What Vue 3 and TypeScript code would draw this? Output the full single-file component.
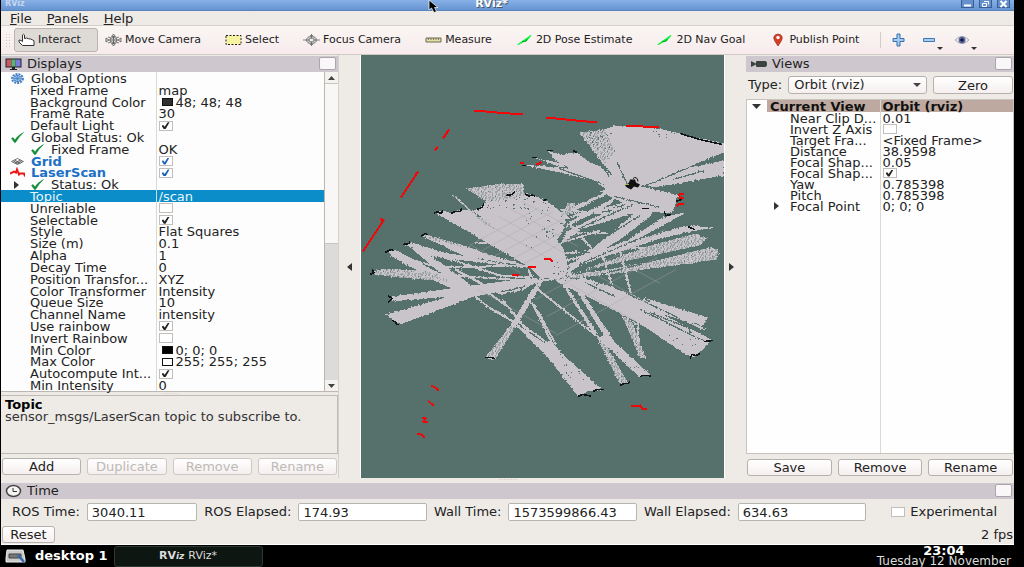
<script setup lang="ts">
import { ref } from 'vue'

type Row = {
  name: string
  value?: string
  checked?: boolean
  swatch?: string
  level?: 'top' | 'child' | 'nested'
  icon?: 'gear' | 'tick' | 'grid' | 'laser'
  expander?: boolean
  display?: boolean
  selected?: boolean
}

const displays = ref<Row[]>([
  { name: 'Global Options', level: 'top', icon: 'gear' },
  { name: 'Fixed Frame', value: 'map' },
  { name: 'Background Color', value: '48; 48; 48', swatch: '#303030' },
  { name: 'Frame Rate', value: '30' },
  { name: 'Default Light', checked: true },
  { name: 'Global Status: Ok', level: 'top', icon: 'tick' },
  { name: 'Fixed Frame', value: 'OK', level: 'nested', icon: 'tick' },
  { name: 'Grid', level: 'top', icon: 'grid', checked: true, display: true },
  { name: 'LaserScan', level: 'top', icon: 'laser', checked: true, display: true },
  { name: 'Status: Ok', level: 'nested', icon: 'tick', expander: true },
  { name: 'Topic', value: '/scan', selected: true },
  { name: 'Unreliable', checked: false },
  { name: 'Selectable', checked: true },
  { name: 'Style', value: 'Flat Squares' },
  { name: 'Size (m)', value: '0.1' },
  { name: 'Alpha', value: '1' },
  { name: 'Decay Time', value: '0' },
  { name: 'Position Transfor...', value: 'XYZ' },
  { name: 'Color Transformer', value: 'Intensity' },
  { name: 'Queue Size', value: '10' },
  { name: 'Channel Name', value: 'intensity' },
  { name: 'Use rainbow', checked: true },
  { name: 'Invert Rainbow', checked: false },
  { name: 'Min Color', value: '0; 0; 0', swatch: '#000000' },
  { name: 'Max Color', value: '255; 255; 255', swatch: '#ffffff' },
  { name: 'Autocompute Int...', checked: true },
  { name: 'Min Intensity', value: '0' },
])

const view = ref<Row[]>([
  { name: 'Near Clip D...', value: '0.01' },
  { name: 'Invert Z Axis', checked: false },
  { name: 'Target Fra...', value: '<Fixed Frame>' },
  { name: 'Distance', value: '38.9598' },
  { name: 'Focal Shap...', value: '0.05' },
  { name: 'Focal Shap...', checked: true },
  { name: 'Yaw', value: '0.785398' },
  { name: 'Pitch', value: '0.785398' },
  { name: 'Focal Point', value: '0; 0; 0', expander: true },
])

const tools = ['Interact', 'Move Camera', 'Select', 'Focus Camera', 'Measure', '2D Pose Estimate', '2D Nav Goal', 'Publish Point']
const activeTool = ref('Interact')

const clocks = [
  { id: 'ros-time', label: 'ROS Time:', value: '3040.11' },
  { id: 'ros-elapsed', label: 'ROS Elapsed:', value: '174.93' },
  { id: 'wall-time', label: 'Wall Time:', value: '1573599866.43' },
  { id: 'wall-elapsed', label: 'Wall Elapsed:', value: '634.63' },
]

/* Free space swept by the scanner, in scene units. */
const free = [
  '579,133 593,132 604,130 613,127 622,126 645,127 662,130 680,134 700,139 724,144 724,153 706,160 690,167 672,174 655,182 640,187 624,187 614,177 606,168 592,150',
  '724,161 724,176 700,180 653,188 648,186 690,168',
  '547,151 563,156 567,153 577,153 590,163 600,167 618,180 626,187 615,194 593,180 573,170 557,162',
  '522,165 545,167 573,169 597,178 592,181 560,173 540,169',
  '533,158 548,161 566,165 562,168',
  '590,178 600,180 645,213 636,212',
  '610,175 640,212 632,212 600,180',
  '620,187 640,187 660,191 678,196 675,206 671,214 658,213 640,211 622,203 600,192',
  '435,213 443,211 452,214 461,210 478,210 484,204 502,196 515,196 525,193 536,197 547,202 558,210 566,216 563,232 557,240 564,250 569,272 558,280 540,278 530,268',
  '640,209 655,210 650,217 620,240 585,262 560,280 547,277 575,262 606,238',
  '617,189 568,215 556,225 562,212 600,195',
  '618,196 570,222 556,238 562,230 610,205',
  '634,202 590,220 566,232 560,246 580,230 640,212',
  '688,212 668,223 632,243 598,252 627,241 663,218',
  '714,228 695,231 660,239 560,272 600,251 686,226',
  '423,235 430,236 480,252 529,267 465,257 425,238',
  '405,245 412,243 440,252 529,269 480,263 432,257',
  '408,246 420,249 450,270 480,292 478,297 440,273',
  '389,252 395,250 432,270 465,287 480,296 465,295 432,280 392,257',
  '392,297 392,302 448,297 545,281 532,278 465,287',
  '385,315 400,325 408,322 472,298 542,283 532,280 465,292 415,307',
  '542,280 540,287 517,326 511,325 532,290',
  '517,325 545,344 550,340 565,357 602,390 588,392 578,397 552,363 532,340',
  '574,287 580,289 615,343 650,375 640,378 612,352 595,335 605,338',
  '552,278 585,280 650,309 710,340 707,346 694,358 681,352 640,324 595,301 560,284',
  '600,285 650,300 708,318 703,326 680,320 640,308 600,289',
]

/* Sparse returns, drawn with a dithered fill. */
const sparse = [
  '466,189 495,185 523,184 525,196 505,200 487,203',
  '450,194 456,197 490,225 500,233 485,225',
  '579,133 604,130 615,152 605,164 592,150',
  '707,239 696,234 650,246 560,279 590,269 700,246',
  '718,250 710,248 640,264 550,281 600,276 717,260',
  '372,272 385,269 432,272 450,282 398,278 375,275',
  '422,235 430,236 480,251 430,240',
  '622,316 640,358 646,358 632,322 640,330 637,324',
  '511,325 517,325 495,360 485,358',
  '568,203 576,203 573,214 562,217',
  '595,335 607,347 628,383 620,385',
]

/* Narrow rays between the wider sweeps. */
const rays = [
  'M395 256L440 268L532 266', 'M430 274L536 282L720 254', 'M432 254L500 276L530 278', 'M455 270L500 294L522 290L548 275',
  'M475 244L490 243', 'M540 268L690 228', 'M560 210L605 214', 'M566 233L608 233', 'M575 215L635 206',
  'M558 221L640 200', 'M610 181L635 215', 'M600 248L618 305L624 319', 'M619 247L631 295', 'M570 225L592 249', 'M528 270L534 282',
  'M475 297L492 310L515 323L548 357', 'M488 293L508 307L522 325L552 347', 'M502 300L530 335', 'M532 303L551 342', 'M534 305L556 345',
  'M538 290L596 336', 'M562 283L595 335', 'M564 284L597 335',
  'M560 271L624 293L705 330', 'M565 242L600 231', 'M558 255L592 251L645 248', 'M650 309L711 341', 'M638 321L639 355',
]

const holes = [
  'M617 163L627 184', 'M673 180L705 171', 'M594 158L609 176', 'M559 169L604 185', 'M614 197L661 208', 'M579 229L633 205', 'M602 240L640 216',
  'M640 310L705 342', 'M650 313L700 333', 'M625 293L680 319', 'M612 351L626 378',
  'M568 240L608 226', 'M579 265L637 240', 'M600 275L690 252', 'M610 285L650 302', 'M566 250L590 253', 'M457 197L480 218', 'M585 283L615 297',
]

const walls = [
  'M434 214l3-2 4 2 2-3', 'M451 214l4-2 5 0 2-3', 'M477 210l5-2 2-4', 'M506 196l6-1 3-3', 'M525 194l4 3 3-2 3 2',
  'M421 237l4-3 3 1', 'M403 245l6-1 1-2', 'M385 253l6-3 3 1', 'M370 275l4-2-2-3', 'M388 296l4 3-4 4', 'M392 321l3 1 2 3 2 0',
  'M485 358l6 0 4 1', 'M578 397l4-2 7 1 2 1', 'M593 392l4-2 7 0', 'M620 386l4-2 4 0 2-2', 'M640 377l3-1 6 0 2 1', 'M690 359l2-4 4 1 4-2',
  'M704 342l9-1', 'M577 153l-4-2', 'M547 151l6 0', 'M680 134l20 6 22 5', 'M688 227l4 2 3 1', 'M664 212l2 4 5-1', 'M642 209l7 0',
  'M676 202l5-2-2-4', 'M543 201l4-1', 'M532 158l5 0', 'M522 166l4 0',
]

const hits = [
  'M474 111l23 2 26 2', 'M546 118l20 2 31 3', 'M626 126l33 2', 'M449 130l-6 9', 'M438 147l-3 4', 'M418 172l-17 26', 'M384 220l-21 32', 'M380 219l4 3',
  'M520 164l4-1', 'M536 165l4-1 1-2', 'M544 260l5-1 4 3', 'M528 268l8-1', 'M512 275l7 0', 'M684 194l-5 1 1 3 4 0', 'M684 204l-6 1-1 2',
  'M431 386l4 2 4 3', 'M428 401l3 3 3 2', 'M422 418l4 1-3 3 5 1', 'M417 434l4 1 4 3', 'M631 407l9-1 2 3 5 1',
]

/* Deterministic scatter so the map looks the same on every load. */
let seed = 17
const next = () => (seed = (seed * 16807) % 2147483647) / 2147483647
const scatter = (n: number, x: number, y: number, w: number, h: number) =>
  Array.from({ length: n }, () => `M${Math.round(x + next() * w)} ${Math.round(y + next() * h)}h1`).join('')
const gaps = [
  scatter(34, 485, 198, 75, 12), scatter(38, 526, 208, 36, 42), scatter(40, 584, 132, 30, 18), scatter(10, 650, 128, 24, 12),
  scatter(24, 560, 355, 30, 30), scatter(20, 660, 320, 36, 26), scatter(20, 552, 262, 20, 20), scatter(16, 600, 342, 40, 32),
].join('')
</script>

<template>
  <div class="desktop">
    <div class="window">
      <header class="titlebar">
        <span class="sys">RViz</span>
        <span class="title">RViz*</span>
        <div class="wm">
          <button aria-label="Minimise"><svg width="11" height="8" viewBox="0 0 11 8"><path d="M2 5.500h7" stroke="#fff" stroke-width="2" /></svg></button>
          <button aria-label="Restore"><svg width="11" height="8" viewBox="0 0 11 8"><path d="M4 1.500h4.500v3M2.500 3.500h4v3h-4z" fill="none" stroke="#fff" /></svg></button>
          <button aria-label="Close"><svg width="11" height="8" viewBox="0 0 11 8"><path d="M2.500 1l6 6m0-6l-6 6" stroke="#fff" stroke-width="2" /></svg></button>
        </div>
      </header>

      <nav class="menubar">
        <button><u>F</u>ile</button>
        <button><u>P</u>anels</button>
        <button><u>H</u>elp</button>
      </nav>

      <div class="toolbar">
        <i class="handle"></i>
        <button v-for="tool in tools" :key="tool" class="tool" :class="{ active: tool === activeTool }" @click="activeTool = tool">
          <svg width="17" height="14" viewBox="0 0 17 14">
            <path v-if="tool === 'Interact'" d="M4.500 12.500L1 9V7l2 .5 1.500 1V2q1-1.500 2 0v3.500l2-.5 2 .7 2 .3 2 .8 1.500 1v4.700z" fill="#fff" stroke="#333" />
            <g v-else-if="tool === 'Move Camera'" fill="#ddd" stroke="#555" stroke-width=".8">
              <path d="M8.500 1l2 2.500h-4zM8.500 13l2-2.500h-4zM1 5l3 2-3 2zM16 5l-3 2 3 2z" /><ellipse cx="8.500" cy="7" rx="3.500" ry="2.500" /><path d="M4 7h9M8.500 3v8M3 4l3 1M14 4l-3 1M3 10l3-1M14 10l-3-1" />
            </g>
            <path v-else-if="tool === 'Select'" d="M1 2.500h15v9H1z" fill="#f7f3a0" stroke="#222" stroke-dasharray="2 1.500" />
            <g v-else-if="tool === 'Focus Camera'" fill="#ccc" stroke="#666" stroke-width=".8">
              <ellipse cx="8.500" cy="7" rx="5" ry="3.800" /><ellipse cx="8.500" cy="7" rx="2.500" ry="2" fill="#eee" /><path d="M8.500 1v4.500M8.500 8.500V13M0 7h6M11 7h6M7 2.500h3M7 11.500h3" />
            </g>
            <g v-else-if="tool === 'Measure'"><path d="M1 5h15v4H1z" fill="#e5dfa4" stroke="#6a6855" /><path d="M3.500 5v2M6 5v2M8.500 5v2M11 5v2M13.500 5v2" stroke="#6a6855" stroke-width=".8" /></g>
            <path v-else-if="tool === 'Publish Point'" d="M9 13L5.500 7.500Q3 2 9 1q6 1 3.500 6.500z" fill="#d73d22" stroke="#942a18" stroke-width=".7" />
            <g v-else><path d="M1 11.500L9 6l5.500-4 1 .5L11 8 8 9l-5.500 3z" fill="#0cf53c" /><path d="M6 8.500l4-.3 1-2" fill="none" stroke="#079b25" /></g>
            <circle v-if="tool === 'Publish Point'" cx="9" cy="4.500" r="1.700" fill="#fff" />
          </svg>
          {{ tool }}
        </button>
        <i class="separator"></i>
        <button class="mini" aria-label="Add tool"><svg width="20" height="22" viewBox="0 0 20 22"><path d="M8 5h3v4.500h4v3h-4V17H8v-4.500H4v-3h4z" fill="#a9cbec" stroke="#2f70b2" /></svg></button>
        <button class="mini" aria-label="Remove tool"><svg width="24" height="22" viewBox="0 0 24 22"><path d="M4.500 9.500h11v3h-11z" fill="#a9cbec" stroke="#3b7ab9" /><path d="M18 18h6l-3 3z" fill="#333" /></svg></button>
        <button class="mini" aria-label="Visibility"><svg width="24" height="22" viewBox="0 0 24 22"><path d="M2 11q7-7 14 0-7 7-14 0z" fill="#eee" stroke="#aaa" /><circle cx="9" cy="11" r="3.500" fill="#6169a5" /><circle cx="9" cy="11" r="1.800" fill="#151b3d" /><path d="M18 18h6l-3 3z" fill="#333" /></svg></button>
      </div>

      <main class="workspace">
        <section class="dock displays">
          <h2 class="dock-title">
            <svg width="17" height="12" viewBox="0 0 17 12"><path d="M.5.500h16v9H.500z" fill="#222" /><path d="M1.500 1.500h5v7h-5z" fill="#c45c65" /><path d="M6.500 1.500h4v7h-4z" fill="#58b86c" /><path d="M10.500 1.500h5v7h-5z" fill="#7b7be0" /><path d="M7 9h3v2h2v1H5v-1h2z" fill="#222" /></svg>
            Displays
            <button class="float" aria-label="Float Displays"></button>
          </h2>
          <div class="tree">
            <table class="props">
              <colgroup><col class="names" /><col /></colgroup>
              <tbody>
                <tr v-for="(row, i) in displays" :key="i" :class="[row.level ?? 'child', { selected: row.selected, display: row.display }]">
                  <td>
                    <div class="cell">
                      <svg v-if="row.expander" class="expander" width="5" height="8" viewBox="0 0 5 8"><path d="M0 0l5 4-5 4z" fill="#333" /></svg>
                      <svg v-if="row.icon" class="icon" width="15" height="11" viewBox="0 0 15 11">
                        <path v-if="row.icon === 'tick'" d="M1.500 6.500l1.500-1 2 2.500Q8 3 13.500.500 9 4.500 5.500 10.500H4.500z" fill="#118a35" stroke="#118a35" stroke-width=".5" />
                        <g v-else-if="row.icon === 'gear'" fill="none" stroke="#3d7cc2"><ellipse cx="7.500" cy="5.500" rx="5.500" ry="4.500" stroke-width="1.800" stroke-dasharray="2 1" /><ellipse cx="7.500" cy="5.500" rx="4" ry="3" fill="#b2d1ef" /><path d="M4 5.500h7M7.500 2v7M5 3.500l5 4M10 3.500l-5 4" stroke-width=".7" /></g>
                        <path v-else-if="row.icon === 'grid'" d="M1.500 5.500l6-3 6 3-6 3zM4.500 4l6 3M10.500 4l-6 3M3 4.800l6 3M12 4.800l-6 3" fill="none" stroke="#555" stroke-width=".8" />
                        <path v-else d="M0 6.500l4-2 2 1 1-3 2 5 1-1h4l1 3" fill="none" stroke="#f01414" stroke-width="2" />
                      </svg>
                      <span>{{ row.name }}</span>
                    </div>
                  </td>
                  <td>
                    <input v-if="row.checked !== undefined" v-model="row.checked" type="checkbox" :aria-label="row.name" />
                    <span v-else class="value"><i v-if="row.swatch" class="swatch" :style="{ background: row.swatch }"></i>{{ row.value }}</span>
                  </td>
                </tr>
              </tbody>
            </table>
            <div class="scrollbar">
              <button aria-label="Scroll up"><svg width="7" height="4" viewBox="0 0 7 4"><path d="M0 4l3.500-4L7 4z" fill="#444" /></svg></button>
              <i class="thumb"></i><i class="track"></i>
              <button aria-label="Scroll down"><svg width="7" height="4" viewBox="0 0 7 4"><path d="M0 0l3.500 4L7 0z" fill="#444" /></svg></button>
            </div>
          </div>
          <i class="grip"></i>
          <div class="help"><strong>Topic</strong><p>sensor_msgs/LaserScan topic to subscribe to.</p></div>
          <div class="actions">
            <button>Add</button><button disabled>Duplicate</button><button disabled>Remove</button><button disabled>Rename</button>
          </div>
        </section>

        <button class="collapse" aria-label="Collapse left"><svg width="5" height="8" viewBox="0 0 5 8"><path d="M5 0L0 4l5 4z" fill="#333" /></svg></button>

        <svg class="scene" viewBox="361 55 363 424" preserveAspectRatio="xMidYMid slice" role="img" aria-label="Laser scan map">
          <defs>
            <pattern id="dither" width="7" height="5" patternUnits="userSpaceOnUse">
              <path d="M0 0h7v5H0z" fill="#c9c4c9" /><path d="M1 0h2v1H1zM5 1h1v2H5zM2 3h2v1H2zM6 4h1v1H6zM0 2h1v1H0z" fill="#6c827f" />
            </pattern>
            <filter id="ragged" x="361" y="55" width="363" height="424" filterUnits="userSpaceOnUse">
              <feTurbulence type="fractalNoise" baseFrequency=".55" numOctaves="2" seed="4" result="n" />
              <feDisplacementMap in="SourceGraphic" in2="n" scale="3" xChannelSelector="R" yChannelSelector="G" />
            </filter>
          </defs>
          <g filter="url(#ragged)" shape-rendering="crispEdges">
            <polygon v-for="(p, i) in free" :key="'f' + i" :points="p" fill="#c9c4c9" />
            <path :d="rays.join('')" fill="none" stroke="#c9c4c9" stroke-width="2" />
            <polygon v-for="(p, i) in sparse" :key="'s' + i" :points="p" fill="url(#dither)" />
            <path :d="holes.join('')" fill="none" stroke="#56706b" stroke-width="1.200" />
            <path :d="gaps" stroke="#56706b" stroke-width="1" />
          </g>
          <path d="M471 245l68-37M482 251l71-39M494 257l70-38M506 263l68-37M517 268l64-35M535 300l130-70M547 317l110-59M556 336l120-66M484 223l63 35M497 216l68 38M510 209l68 38M522 202l60 32M570 285l66 37M590 272l60 33M620 262l40 22M470 245l50 28M478 290l78 44" fill="none" stroke="#a5a5a6" stroke-width=".7" opacity=".6" />
          <path :d="walls.join('')" fill="none" stroke="#101614" stroke-width="1.500" shape-rendering="crispEdges" />
          <path d="M625 186l4-3 1-3 5 0 1 3 4 2-2 3-4-1-3 3-4-2z" fill="#111" /><path d="M633 179q4-3 5 3" fill="none" stroke="#111" /><path d="M626 185h3" stroke="#a7b51e" />
          <path :d="hits.join('')" fill="none" stroke="#f00808" stroke-width="2" shape-rendering="crispEdges" />
        </svg>

        <button class="collapse right" aria-label="Collapse right"><svg width="5" height="8" viewBox="0 0 5 8"><path d="M0 0l5 4-5 4z" fill="#333" /></svg></button>

        <section class="dock views">
          <h2 class="dock-title">
            <svg width="17" height="12" viewBox="0 0 17 12"><path d="M1 3l5 2.500V4q0-1 1-1h8q2 0 2 3t-2 3H7Q6 9 6 8V6.500L1 9z" fill="#3b433f" /></svg>
            Views
            <button class="float" aria-label="Float Views"></button>
          </h2>
          <div class="type-row">
            <label for="view-type">Type:</label>
            <div class="combo">
              <select id="view-type"><option>Orbit (rviz)</option></select>
              <svg width="8" height="4" viewBox="0 0 8 4"><path d="M0 0h8L4 4z" fill="#444" /></svg>
            </div>
            <button>Zero</button>
          </div>
          <div class="view-tree">
            <table class="props">
              <colgroup><col class="names" /><col /></colgroup>
              <thead>
                <tr>
                  <th><div class="cell root"><svg width="9" height="5" viewBox="0 0 9 5"><path d="M0 0h9L4.500 5z" fill="#333" /></svg><span>Current View</span></div></th>
                  <th>Orbit (rviz)</th>
                </tr>
              </thead>
              <tbody>
                <tr v-for="(row, i) in view" :key="i">
                  <td>
                    <div class="cell leaf"><svg v-if="row.expander" class="expander" width="5" height="8" viewBox="0 0 5 8"><path d="M0 0l5 4-5 4z" fill="#333" /></svg><span>{{ row.name }}</span></div>
                  </td>
                  <td>
                    <input v-if="row.checked !== undefined" v-model="row.checked" type="checkbox" :aria-label="row.name" />
                    <span v-else class="value">{{ row.value }}</span>
                  </td>
                </tr>
                <tr class="filler"><td></td><td></td></tr>
              </tbody>
            </table>
          </div>
          <div class="actions"><button>Save</button><button>Remove</button><button>Rename</button></div>
        </section>
      </main>

      <i class="grip bottom"></i>
      <section class="time">
        <h2 class="dock-title">
          <svg width="17" height="14" viewBox="0 0 17 14"><ellipse cx="8.500" cy="7" rx="7" ry="5.500" fill="#f4f4f2" stroke="#444" stroke-width="1.500" /><path d="M8 4v3.500h4" fill="none" stroke="#333" /></svg>
          Time
          <button class="float" aria-label="Float Time"></button>
        </h2>
        <div class="clocks">
          <template v-for="clock in clocks" :key="clock.id">
            <label :for="clock.id">{{ clock.label }}</label>
            <input :id="clock.id" type="text" :class="['clock', clock.id]" :value="clock.value" readonly />
          </template>
          <label class="experimental"><input type="checkbox" />Experimental</label>
        </div>
        <div class="status-row"><button>Reset</button><span>2 fps</span></div>
      </section>
    </div>

    <footer class="taskbar">
      <svg width="22" height="14" viewBox="0 0 22 14"><path d="M2 1h16l2 9v3H1v-4z" fill="#c9cac9" stroke="#eee" /><path d="M4 5h12v4H4z" fill="#777" stroke="#444" /><path d="M13 6l6 7" stroke="#3569b0" stroke-width="2.500" /></svg>
      <span class="desk-name">desktop 1</span>
      <button class="task"><b>RV<i>iz</i></b>RViz*</button>
      <div class="datetime"><strong>23:04</strong><span>Tuesday 12 November</span></div>
    </footer>

    <svg class="pointer" width="12" height="14" viewBox="0 0 12 14"><path d="M1 0v10l2.500-2 2.500 4.500 2.500-1L6.500 7.500H10z" fill="#000" stroke="#fff" stroke-width=".7" /></svg>
  </div>
</template>

<style>
html, body { margin: 0; background: #000; }
</style>

<style scoped>
* { box-sizing: border-box; }
.desktop { position: relative; display: flex; flex-direction: column; height: 100vh; overflow: hidden; background: #000; color: #222; font: 13px/12px "DejaVu Sans", sans-serif; }
button, input, select { margin: 0; padding: 0; font: inherit; color: inherit; }
button { border: 0; background: none; white-space: nowrap; }
svg { display: block; flex: none; }
.window { flex: 1; min-height: 0; display: flex; flex-direction: column; margin: 0 10px 0 1px; background: #eeebe7; border-bottom: 1px solid #fff; }

.titlebar { display: grid; grid-template-columns: 1fr auto 1fr; height: 11px; line-height: 7px; background: linear-gradient(#88b0e6, #6594d2); color: #fff; font-weight: bold; font-size: 11px; border-bottom: 1px solid #5a83b8; }
.sys { padding-left: 4px; font-size: 8px; color: #c6d6ee; }
.title { text-shadow: 1px 1px #456; padding-right: 32px; }
.wm { display: flex; justify-content: flex-end; gap: 5px; padding-right: 4px; }
.wm button { height: 8px; border: solid #365f98; border-width: 0 1px 1px; background: #6590cb; }

.menubar { display: flex; height: 15px; padding-left: 9px; gap: 15px; border-bottom: 1px solid #d5d0ca; background: #eeebe6; }
.menubar button { line-height: 13px; }
.menubar u { text-underline-offset: 1px; }

.toolbar { display: flex; align-items: center; height: 29px; padding-left: 4px; background: linear-gradient(#f9f6f3, #f8ebed); border-bottom: 1px solid #cfcac6; font-size: 11px; }
.handle { width: 5px; height: 14px; margin-right: 4px; background: radial-gradient(circle, #cbc5c3 1px, transparent 1px) 0 0 / 3px 3px; }
.tool { display: flex; align-items: center; gap: 3px; height: 24px; padding: 0 16px 0 3px; margin-right: 3px; border: 1px solid transparent; border-radius: 3px; }
.tool.active { background: #dedad6; border-color: #bab5b1; }
.separator { width: 1px; height: 16px; margin: 0 8px 0 1px; background: #d2cccc; }
.mini { margin-right: 10px; }

.workspace { flex: 1; min-height: 0; display: flex; }
.dock { display: flex; flex-direction: column; min-height: 0; padding-top: 1px; }
.displays { flex: 0 0 338px; border-right: 1px solid #d3cfcb; }
.views { flex: 0 0 268px; }
.dock-title { display: flex; align-items: center; gap: 5px; height: 16px; flex: none; margin: 0; padding: 0 2px 1px 4px; font: inherit; background: #cec8ce; }
.float { width: 17px; height: 13px; margin-left: auto; border: 1px solid #aaa5a8; border-radius: 2px; background: #f9f7f7; }

.tree { flex: 1; min-height: 0; display: grid; grid-template-columns: 1fr 14px; border-bottom: 1px solid #bcb7b2; background: #fdfdfd; }
.props { width: 100%; border-collapse: collapse; table-layout: fixed; line-height: 11px; }
.tree .props { height: 100%; }
.names { width: 155px; }
.props td, .props th { padding: 1px 0 0 2px; text-align: left; vertical-align: middle; white-space: nowrap; }
.props td:first-child, .props th:first-child { padding: 1px 0 0; border-right: 1px solid #d5dad4; }
.cell { display: flex; align-items: center; position: relative; height: 10px; padding-left: 29px; }
.top .cell { padding-left: 9px; }
.top .icon, .nested .icon { margin-right: 6px; }
.expander { position: absolute; left: 13px; }
.display td:first-child { color: #1b70c5; font-weight: bold; }
.display input { color: #1b60b5; }
.selected { background: #0b8dca; color: #e8f5fc; }
.value { display: flex; align-items: center; height: 10px; }
.swatch { width: 11px; height: 8px; margin: 0 3px; border: 1px solid #111; }
input[type="checkbox"] { appearance: none; display: grid; place-items: center; width: 14px; height: 10px; border: 1px solid #c3bebb; background: #fff; }
input[type="checkbox"]:checked::before { content: ""; width: 8px; height: 7px; background: currentColor; clip-path: polygon(0 50%, 22% 40%, 40% 65%, 78% 0, 100% 0, 50% 100%, 30% 100%); }

.scrollbar { display: flex; flex-direction: column; border-left: 1px solid #bbb6b1; }
.scrollbar button { display: grid; place-items: center; height: 11px; background: #f4f1ef; }
.thumb { flex: 162; border: solid #c9c4bf; border-width: 1px 0; background: #f8f7f6; }
.track { flex: 138; background: #dddbd9; }
.grip { flex: none; align-self: center; width: 18px; height: 3px; background: radial-gradient(circle, #c9c3be 1px, transparent 1px) center / 3px 3px; }
.grip.bottom { height: 3px; margin-bottom: 2px; }
.help { flex: none; height: 59px; padding: 3px 4px; border: 1px solid #bfbab5; border-left: 0; line-height: 12px; color: #333; }
.help strong { color: #000; }
.help p { margin: 0; }
.actions { display: flex; gap: 6px; flex: none; padding: 4px 1px; }
.displays .actions { padding-bottom: 3px; }
.actions button, .type-row button, .status-row button { flex: 1 1 0; height: 17px; line-height: 15px; border: 1px solid #b6b1ac; border-radius: 3px; background: linear-gradient(#fff, #f6efef); }
.actions button:disabled { color: #bdb9b6; border-color: #cdc8c4; }

.collapse { flex: 0 0 22px; display: grid; place-items: center; border-right: 1px solid #fff; }
.collapse.right { border: 0; border-left: 1px solid #fff; padding-right: 8px; }
.scene { flex: 1 1 0; min-width: 0; height: 100%; background: #56706b; }

.type-row { display: flex; align-items: center; gap: 6px; flex: none; padding: 4px 1px 5px 2px; }
.type-row button { flex: 0 0 80px; height: 18px; }
.combo { flex: 1; display: grid; align-items: center; }
.combo select, .combo svg { grid-area: 1 / 1; }
.combo svg { justify-self: end; margin-right: 6px; pointer-events: none; }
.combo select { appearance: none; width: 100%; height: 18px; padding-left: 5px; border: 1px solid #b6b1ac; border-radius: 3px; background: linear-gradient(#fff, #f6efef); }
.view-tree { flex: 1; min-height: 0; border: 1px solid #c9c3be; background: #fefefe; }
.view-tree .props { height: 100%; }
.views .names { width: 133px; }
.view-tree th { background: #bda99f; color: #111; }
.view-tree tr { height: 11px; }
.view-tree .filler { height: auto; }
.view-tree th:first-child { background: linear-gradient(90deg, #fefefe 20px, #bda99f 20px); }
.root { padding-left: 5px; gap: 9px; }
.leaf { padding-left: 43px; }
.leaf .expander { left: 27px; }
.views .actions { padding: 5px 1px 2px; }

.time { flex: none; }
.clocks { display: flex; align-items: center; gap: 7px; padding: 4px 17px 5px 11px; white-space: nowrap; }
.clock { flex: 131 1 0; min-width: 0; width: 0; height: 18px; padding: 0 4px; border: 1px solid #b7b6ae; border-radius: 2px; background: #fff; }
.clock.ros-time { flex-grow: 111; }
.experimental { display: flex; align-items: center; gap: 5px; margin-left: 18px; }
.status-row { display: flex; align-items: center; justify-content: space-between; padding: 0 1px 1px; }
.status-row button { flex: 0 0 53px; }

.taskbar { flex: none; display: flex; align-items: center; height: 22px; padding: 0 13px 0 5px; color: #ddd; }
.desk-name { margin-left: 8px; font-weight: bold; color: #fff; }
.task { display: flex; align-items: center; justify-content: center; gap: 4px; width: 149px; height: 21px; margin-left: 6px; border: 1px solid #2d3a34; border-radius: 3px; background: #0e1612; font-size: 11px; }
.task i { font-size: 9px; }
.datetime { margin-left: auto; display: grid; justify-items: center; line-height: 10px; font-size: 12px; }
.datetime strong { font-size: 13px; color: #fff; }
.pointer { position: absolute; left: 428px; top: 0; }
</style>
